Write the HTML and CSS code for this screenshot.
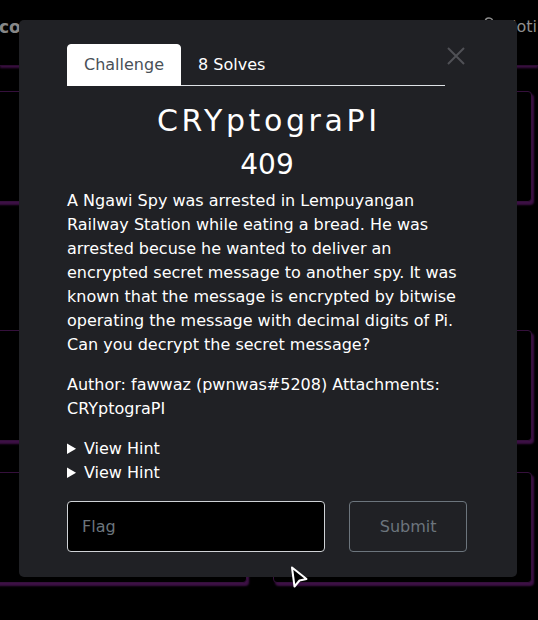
FILE: index.html
```html
<!DOCTYPE html>
<html lang="en">
<head>
<meta charset="utf-8">
<title>CRYptograPI</title>
<link rel="stylesheet" href="styles.css">
</head>
<body>
<div class="page">
  <header class="navbar">
    <span class="brand">conquest</span>
    <span class="nav-right">
      <svg class="bell" width="12" height="14" viewBox="0 0 12 14"><path d="M6 1c-2.5 0-4 2-4 4.5V9L1 11h10L10 9V5.5C10 3 8.5 1 6 1z" fill="none" stroke="#8d8d8d" stroke-width="1.4"/></svg>
      <span class="nav-link">Noti</span>
    </span>
  </header>
  <main class="board">
    <section class="row row-1"><div class="card"></div><div class="card"></div></section>
    <section class="row row-2"><div class="card"></div><div class="card"></div></section>
    <section class="row row-3"><div class="card"></div><div class="card"></div></section>
  </main>
</div>

<div class="modal">
  <div class="dialog">
    <div class="tabs-row">
      <ul class="tabs">
        <li class="tab active">Challenge</li>
        <li class="tab">8 Solves</li>
      </ul>
      <button class="close" aria-label="Close">
        <svg width="18" height="18" viewBox="0 0 18 18"><path d="M1 1L17 17M17 1L1 17" stroke="#505156" stroke-width="2" fill="none"/></svg>
      </button>
    </div>
    <h2 class="title">CRYptograPI</h2>
    <h3 class="value">409</h3>
    <p class="desc">A Ngawi Spy was arrested in Lempuyangan Railway Station while eating a bread. He was arrested becuse he wanted to deliver an encrypted secret message to another spy. It was known that the message is encrypted by bitwise operating the message with decimal digits of Pi. Can you decrypt the secret message?</p>
    <p class="author">Author: fawwaz (pwnwas#5208) Attachments: CRYptograPI</p>
    <details class="hint"><summary>View Hint</summary></details>
    <details class="hint"><summary>View Hint</summary></details>
    <form class="flag-form">
      <input class="flag" type="text" placeholder="Flag">
      <button class="submit" type="button">Submit</button>
    </form>
  </div>
</div>

<svg class="cursor" width="24" height="28" viewBox="0 0 24 28"><path d="M3 2.5L17.5 14L10.5 15.5L5.5 21.5Z" fill="#000" stroke="#fff" stroke-width="2" stroke-linejoin="round"/></svg>
</body>
</html>
```
FILE: styles.css
```css
html, body {
  margin: 0;
  padding: 0;
  background: #000;
  width: 538px;
  height: 620px;
  overflow: hidden;
  font-family: "DejaVu Sans", sans-serif;
}

.page {
  width: 538px;
}

.navbar {
  height: 65px;
  box-sizing: border-box;
  padding-top: 17px;
  display: flex;
  align-items: flex-start;
  box-shadow: 0 1px 0 #2c0c31, 0 3px 2px #3b0f42;
}

.brand {
  margin-left: -1px;
  font-weight: bold;
  font-size: 17px;
  line-height: 20px;
  color: #878787;
  white-space: nowrap;
}

.nav-right {
  margin-left: auto;
  margin-right: 1px;
  display: flex;
  align-items: flex-start;
  gap: 10px;
}

.nav-link {
  font-size: 16px;
  line-height: 20px;
  color: #8f8f8f;
}

.board {
  margin-left: -12px;
  padding-top: 26px;
}

.row {
  display: grid;
  grid-template-columns: 259px 259px;
  column-gap: 26px;
}

.row-2 { margin-top: 128px; }
.row-3 { margin-top: 31px; }

.card {
  height: 109px;
  border: 1px solid #35103c;
  border-radius: 4px;
  background: #000;
  box-shadow: 2px 3px 2px #3d1045;
}

/* Modal */
.modal {
  position: fixed;
  inset: 0;
  padding: 20px 21px 43px 19px;
  box-sizing: border-box;
}

.dialog {
  height: 100%;
  box-sizing: border-box;
  background: #202125;
  border-radius: 5px;
  padding: 24px 50px 0 48px;
  color: #fff;
}

.tabs-row {
  display: flex;
  align-items: flex-start;
}

.tabs {
  list-style: none;
  margin: 0;
  padding: 0;
  width: 378px;
  display: flex;
  border-bottom: 1px solid #dee2e6;
}

.tab {
  padding: 8px 16px;
  border: 1px solid transparent;
  border-radius: 4px 4px 0 0;
  margin-bottom: -1px;
  font-size: 16px;
  line-height: 24px;
  color: #fff;
}

.tab.active {
  background: #fff;
  color: #495057;
  border-color: #fff;
}

.close {
  margin: 3px 0 0 2px;
  padding: 0;
  width: 18px;
  height: 18px;
  border: 0;
  background: none;
  display: flex;
}

.title {
  margin: 17px 0 0;
  text-align: center;
  font-weight: normal;
  font-size: 30px;
  line-height: 36px;
  letter-spacing: 3.6px;
  text-indent: 3.6px;
}

.value {
  margin: 9px 0 0;
  text-align: center;
  font-weight: normal;
  font-size: 28px;
  line-height: 34px;
}

.desc, .author {
  margin: 7px 0 0;
  font-size: 16px;
  line-height: 24px;
}

.author {
  margin-top: 16px;
}

.hint {
  font-size: 16px;
  line-height: 24px;
}

.hint:first-of-type {
  margin-top: 16px;
}

.hint summary {
  cursor: pointer;
}

.flag-form {
  margin-top: 16px;
  display: flex;
  gap: 24px;
}

.flag {
  width: 259px;
  height: 51px;
  box-sizing: border-box;
  background: #000;
  border: 1px solid #cfd2d6;
  border-radius: 4px;
  padding: 0 14px;
  font-family: inherit;
  font-size: 16px;
  color: #fff;
}

.flag::placeholder {
  color: #6c757d;
}

.submit {
  width: 118px;
  height: 51px;
  background: transparent;
  border: 1px solid #6c757d;
  border-radius: 4px;
  font-family: inherit;
  font-size: 16px;
  color: #6c757d;
}

.cursor {
  position: fixed;
  left: 289px;
  top: 565px;
}
```
